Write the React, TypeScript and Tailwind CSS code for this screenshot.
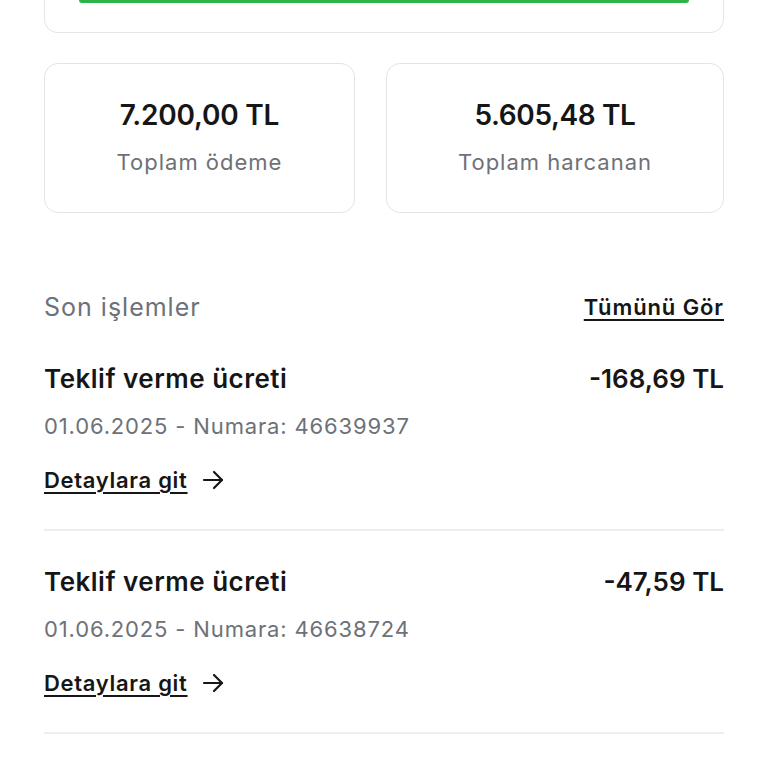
import React from "react";

const font = { fontFamily: "Inter, 'Noto Sans', sans-serif" };

function Arrow() {
  return (
    <svg width="22" height="20" viewBox="0 0 22 20" fill="none" stroke="#161616" strokeWidth="2.2" strokeLinecap="round" strokeLinejoin="round">
      <path d="M2 10H20" />
      <path d="M12 2L20 10L12 18" />
    </svg>
  );
}

function Row({ amount, num }: { amount: string; num: string }) {
  return (
    <div className="flex flex-col">
      <div className="flex items-center justify-between">
        <span className="text-[26px] leading-[32px] font-semibold text-[#161616] tracking-[0.5px]">Teklif verme ücreti</span>
        <span className="text-[26px] leading-[32px] font-semibold text-[#161616] tracking-[0px]">{amount}</span>
      </div>
      <div className="mt-[16px] text-[22px] leading-[30px] text-[#6d7178] tracking-[0.85px]">01.06.2025 - Numara: {num}</div>
      <div className="mt-[24px] flex items-center gap-[14px]">
        <span className="text-[22px] leading-[30px] font-semibold text-[#161616] tracking-[0.7px] underline underline-offset-[4px] decoration-[2px]">Detaylara git</span>
        <Arrow />
      </div>
      <div className="mt-[34px] h-[2px] bg-[#eeeeee]" />
    </div>
  );
}

export default function App() {
  return (
    <div className="w-[768px] h-[768px] overflow-hidden bg-white px-[44px]" style={font}>
      <div className="h-[33px] border border-t-0 border-[#e6e6e6] rounded-b-[14px] px-[34px]">
        <div className="h-[3px] bg-[#2eb34b] rounded-b-full" />
      </div>
      <div className="mt-[30px] flex gap-[31px]">
        <div className="w-[311px] h-[150px] border border-[#e4e4e4] rounded-[14px] flex flex-col items-center justify-center">
          <div className="text-[28px] leading-[32px] font-semibold text-[#161616] tracking-[-0.2px]">7.200,00 TL</div>
          <div className="mt-[16px] text-[22px] leading-[30px] text-[#6d7178] tracking-[1px]">Toplam ödeme</div>
        </div>
        <div className="flex-1 h-[150px] border border-[#e4e4e4] rounded-[14px] flex flex-col items-center justify-center">
          <div className="text-[28px] leading-[32px] font-semibold text-[#161616] tracking-[-0.4px]">5.605,48 TL</div>
          <div className="mt-[16px] text-[22px] leading-[30px] text-[#6d7178] tracking-[1px]">Toplam harcanan</div>
        </div>
      </div>
      <div className="mt-[79px] flex items-center justify-between">
        <span className="text-[25px] leading-[30px] text-[#6d7178] tracking-[1px]">Son işlemler</span>
        <span className="text-[22px] leading-[30px] font-semibold text-[#161616] tracking-[0.9px] underline underline-offset-[4px] decoration-[2px]">Tümünü Gör</span>
      </div>
      <div className="mt-[41px]">
        <Row amount="-168,69 TL" num="46639937" />
      </div>
      <div className="mt-[35px]">
        <Row amount="-47,59 TL" num="46638724" />
      </div>
    </div>
  );
}
